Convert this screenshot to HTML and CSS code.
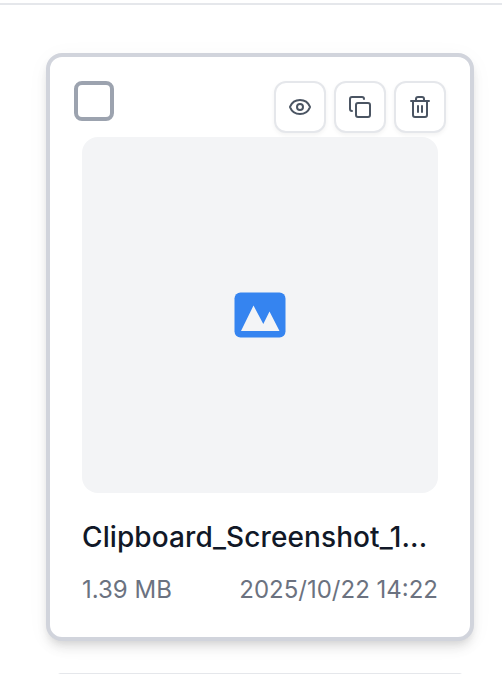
FILE: index.html
```html
<!DOCTYPE html>
<html lang="en">
<head>
<meta charset="utf-8">
<title>Files</title>
<link rel="stylesheet" href="styles.css">
</head>
<body>
<main class="page">
  <article class="card">
    <header class="toolbar">
      <span class="checkbox" role="checkbox" aria-checked="false"></span>
      <div class="actions">
        <button class="action"><svg viewBox="0 0 24 24"><path d="M2.1 12.3a1 1 0 0 1 0-.7 10.7 10.7 0 0 1 19.8 0 1 1 0 0 1 0 .7 10.7 10.7 0 0 1-19.8 0Z"/><circle cx="12" cy="12" r="3"/></svg></button>
        <button class="action"><svg viewBox="0 0 24 24"><rect x="8" y="8" width="14" height="14" rx="2"/><path d="M4 16c-1.1 0-2-.9-2-2V4c0-1.1.9-2 2-2h10c1.1 0 2 .9 2 2"/></svg></button>
        <button class="action"><svg viewBox="0 0 24 24"><path d="M3 6h18M19 6v14a2 2 0 0 1-2 2H7a2 2 0 0 1-2-2V6M8 6V4a2 2 0 0 1 2-2h4a2 2 0 0 1 2 2v2M10 11v6M14 11v6"/></svg></button>
      </div>
    </header>
    <div class="preview">
      <svg class="picture" viewBox="0 0 52 46"><rect x=".5" y=".5" width="51" height="45" rx="6"/><path d="M7 39 19.5 13.5 29.3 32 35.5 19.5 45.5 39Z"/></svg>
    </div>
    <h2 class="name">Clipboard_Screenshot_1...</h2>
    <div class="meta"><span>1.39 MB</span><span>2025/10/22 14:22</span></div>
  </article>
  <div class="next"></div>
</main>
</body>
</html>
```
FILE: styles.css
```css
* { box-sizing: border-box; }
html { overflow: hidden; }
body {
  margin: 0;
  height: 674px;
  overflow: hidden;
  background: #fff;
  font-family: Inter, "Liberation Sans", sans-serif;
}
.page {
  margin-top: 3px;
  border-top: 2px solid #e5e7eb;
  padding: 48px 28px 0 46px;
}
.card {
  height: 588px;
  padding: 24px;
  border: 4px solid #d1d5db;
  border-color: #d1d4dc;
  border-radius: 16px;
  background: #fff;
  box-shadow: 0 8px 12px -2px rgba(0, 0, 0, .1), 0 4px 8px -4px rgba(0, 0, 0, .1), 0 4px 24px rgba(0, 0, 0, .035);
}
.toolbar {
  display: flex;
  justify-content: space-between;
  align-items: flex-start;
}
.checkbox {
  width: 40px;
  height: 40px;
  border: 4px solid #9ca3af;
  border-radius: 8px;
}
.actions { display: flex; gap: 8px; }
.action {
  display: grid;
  place-items: center;
  width: 52px;
  height: 52px;
  padding: 0;
  border: 2px solid #e5e7eb;
  border-radius: 12px;
  background: #fff;
  box-shadow: 0 2px 4px rgba(0, 0, 0, .05);
}
.action svg {
  width: 24px;
  height: 24px;
  fill: none;
  stroke: #4b5563;
  stroke-width: 2;
  stroke-linecap: round;
  stroke-linejoin: round;
}
.preview {
  display: grid;
  place-items: center;
  height: 356px;
  margin: 4px 8px 0;
  border-radius: 16px;
  background: #f3f4f6;
}
.picture { width: 52px; height: 46px; }
.picture rect { fill: #3584f0; }
.picture path { fill: #f3f4f6; }
.name {
  margin: 24px 8px 0;
  font-size: 28px;
  font-weight: 500;
  line-height: 40px;
  letter-spacing: .1px;
  color: #111827;
  white-space: nowrap;
}
.meta {
  display: flex;
  justify-content: space-between;
  margin: 17px 8px 0;
  font-size: 24px;
  line-height: 32px;
  color: #6b7280;
  white-space: nowrap;
}
.next {
  height: 2px;
  margin: 32px 12px 0;
  background: linear-gradient(90deg, transparent, #e5e7eb 2px, #e5e7eb calc(100% - 2px), transparent);
}
```
